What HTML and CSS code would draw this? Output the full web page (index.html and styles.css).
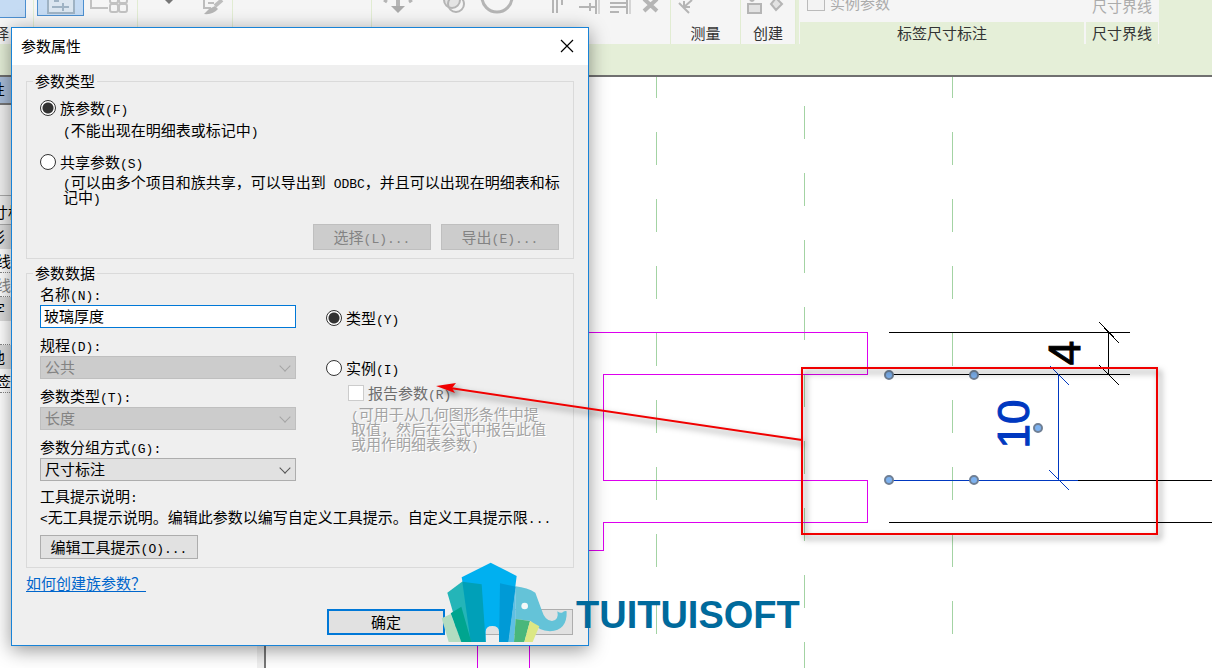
FILE: index.html
```html
<!DOCTYPE html>
<html lang="zh-CN">
<head>
<meta charset="utf-8">
<title>参数属性</title>
<link rel="stylesheet" href="styles.css">
</head>
<body>
<div class="app">
  <header class="ribbon">
    <section class="group group-select">
      <div class="tools"><span class="tool-active tool-cursor"></span></div>
      <h2 class="group-label">选择</h2>
    </section>
    <section class="group group-props">
      <div class="tools">
        <span class="tool-active tool-type">
          <svg width="28" height="15" viewBox="0 0 28 15" fill="none" stroke="#9fb3c4" stroke-width="2"><path d="M1 0V13H27V0" fill="#dbe6f0"/><path d="M5 7H22M16 3V11M7 1H12"/></svg>
        </span>
        <svg width="42" height="16" viewBox="0 0 42 16" fill="none" stroke="#c2c2c2" stroke-width="2"><path d="M3 0V8H20"/><rect x="22" y="-5" width="8" height="8" rx="2"/><rect x="31" y="-5" width="8" height="8" rx="2"/><rect x="22" y="4" width="8" height="8" rx="2"/><rect x="31" y="4" width="8" height="8" rx="2"/></svg>
      </div>
    </section>
    <section class="group group-clip">
      <div class="tools">
        <svg width="90" height="18" viewBox="0 0 90 18" fill="none" stroke="#bdbdbd" stroke-width="2"><path d="M27 0H35L31 4Z" fill="#777" stroke="none"/><path d="M66 0V8H73M70 3H76"/><path d="M84 0L77 6" stroke-width="4"/><path d="M77 6L71 9L66 14Q75 15 80 9Z" fill="#b5b5b5" stroke="none"/></svg>
      </div>
    </section>
    <section class="group group-geometry"></section>
    <section class="group group-modify">
      <div class="tools">
        <svg width="296" height="18" viewBox="0 0 296 18" fill="none" stroke="#b5b5b5" stroke-width="2">
          <path d="M26 0V7" stroke-width="4"/><path d="M19 6H33L26 13Z" fill="#aaa" stroke="none"/><path d="M12 0L15 2M40 0L37 2" stroke-width="3"/>
          <circle cx="80" cy="0" r="8" fill="#e4e4e4"/><circle cx="84" cy="4" r="8"/>
          <circle cx="125" cy="-3" r="15" stroke-width="3"/>
          <path d="M181 0V13M185 0V13M190 0V5"/>
          <path d="M207 7H223M224 0V14M218 3V11"/><path d="M227 0V14" stroke-width="1"/>
          <path d="M238 3H256M238 7H256M238 12H247M255 0V14"/><path d="M258 0V14" stroke-width="1"/>
          <path d="M272 -1L285 11M285 -1L272 11" stroke-width="4"/>
        </svg>
      </div>
    </section>
    <section class="group group-measure">
      <div class="tools"><svg width="30" height="16" viewBox="0 0 30 16" fill="none" stroke="#b5b5b5" stroke-width="2"><path d="M8 3L18 13M21 0L13 7M13 1V7H19"/></svg></div>
      <h2 class="group-label">测量</h2>
    </section>
    <section class="group group-create">
      <div class="tools"><svg width="48" height="16" viewBox="0 0 48 16" fill="#e2e2e2" stroke="#b5b5b5" stroke-width="2"><rect x="7" y="4" width="13" height="9"/><path d="M9 0H13L11 1ZM35 -2L41 4L35 10L30 4Z"/></svg></div>
      <h2 class="group-label">创建</h2>
    </section>
    <section class="group group-label-dim">
      <div class="tools"><label class="ribbon-check"><input type="checkbox" disabled>实例参数</label></div>
      <h2 class="group-label">标签尺寸标注</h2>
    </section>
    <section class="group group-witness">
      <div class="tools"><span class="tool-text">尺寸界线</span></div>
      <h2 class="group-label">尺寸界线</h2>
    </section>
  </header>

  <main class="workspace">
    <aside class="properties">
      <div class="prop prop-title">性</div>
      <div class="prop prop-preview"></div>
      <div class="prop prop-family">寸标</div>
      <div class="prop prop-head">形</div>
      <div class="prop">线</div>
      <div class="prop prop-muted">线</div>
      <div class="prop prop-head">字</div>
      <div class="prop"></div>
      <div class="prop prop-head">他</div>
      <div class="prop">签</div>
    </aside>
    <svg class="drawing" role="img" aria-label="族视图">
      <g transform="translate(-266 -77)" fill="none" shape-rendering="crispEdges">
        <g stroke="#a3d3a3" stroke-dasharray="33 34">
          <path d="M656.5 65V668"/><path d="M804.5 106V668"/><path d="M952.5 65V668"/>
        </g>
        <path stroke="#dd00ee" d="M560 332.500H867.500V374.500H603.500V480.500H867.500V522.500H603.500V550.500H560M477.500 600V668M529.500 600V668"/>
        <path stroke="#000" d="M889 332.500H1130M889 374.500H1130M1108.500 332V374M1099 322L1119 343M1099 365L1119 385M1078 480.500H2400M889 522.500H2400"/>
        <path stroke="#0038c0" d="M1058.500 375V480M889 480.500H1078M1050 366L1069 385M1049 470L1069 490"/>
      </g>
      <g transform="translate(-266 -77)">
        <g class="grips"><circle cx="889" cy="375" r="4"/><circle cx="974" cy="375" r="4"/><circle cx="889" cy="480" r="4"/><circle cx="974" cy="480" r="4"/><circle cx="1038" cy="428" r="4"/></g>
        <text class="dim" transform="translate(1080 353) rotate(-90)">4</text>
        <text class="dim dim-active" transform="translate(1029 424) rotate(-90)">10</text>
      </g>
    </svg>
  </main>
</div>

<form class="dialog" role="dialog" aria-labelledby="dialog-title">
  <div class="titlebar">
    <h1 id="dialog-title" class="title">参数属性</h1>
    <button type="button" class="close" aria-label="关闭"><svg width="14" height="14" viewBox="0 0 14 14" stroke="#000" stroke-width="1.200"><path d="M1 1L13 13M13 1L1 13"/></svg></button>
  </div>
  <div class="content">
    <fieldset class="box">
      <legend>参数类型</legend>
      <label class="option"><input type="radio" name="kind" checked><span>族参数<span class="lat">(F)</span></span></label>
      <p class="note"><span class="lat">(</span>不能出现在明细表或标记中<span class="lat">)</span></p>
      <label class="option"><input type="radio" name="kind"><span>共享参数<span class="lat">(S)</span></span></label>
      <p class="note note-tight"><span class="lat">(</span>可以由多个项目和族共享，可以导出到<span class="lat"> ODBC</span>，并且可以出现在明细表和标<br>记中<span class="lat">)</span></p>
      <div class="actions">
        <button type="button" class="btn" disabled>选择<span class="lat">(L)...</span></button>
        <button type="button" class="btn" disabled>导出<span class="lat">(E)...</span></button>
      </div>
    </fieldset>

    <fieldset class="box box-data">
      <legend>参数数据</legend>
      <div class="columns">
        <div class="fields">
          <div class="field">
            <label for="name">名称<span class="lat">(N):</span></label>
            <input id="name" class="text" type="text" value="玻璃厚度">
          </div>
          <div class="field">
            <label for="discipline">规程<span class="lat">(D):</span></label>
            <div class="combo combo-off"><select id="discipline" disabled><option>公共</option></select></div>
          </div>
          <div class="field">
            <label for="type">参数类型<span class="lat">(T):</span></label>
            <div class="combo combo-off"><select id="type" disabled><option>长度</option></select></div>
          </div>
          <div class="field">
            <label for="grouping">参数分组方式<span class="lat">(G):</span></label>
            <div class="combo"><select id="grouping"><option>尺寸标注</option></select></div>
          </div>
        </div>
        <div class="scope">
          <label class="option"><input type="radio" name="scope" checked><span>类型<span class="lat">(Y)</span></span></label>
          <label class="option option-instance"><input type="radio" name="scope"><span>实例<span class="lat">(I)</span></span></label>
          <label class="option option-report"><input type="checkbox" disabled><span>报告参数<span class="lat">(R)</span></span></label>
          <p class="note-off"><span class="lat">(</span>可用于从几何图形条件中提<br>取值，然后在公式中报告此值<br>或用作明细表参数<span class="lat">)</span></p>
        </div>
      </div>
      <div class="tooltip-block">
        <p>工具提示说明<span class="lat">:</span></p>
        <p class="tooltip-text"><span class="lat">&lt;</span>无工具提示说明。编辑此参数以编写自定义工具提示。自定义工具提示限<span class="lat">...</span></p>
        <button type="button" class="btn btn-edit">编辑工具提示<span class="lat">(O)...</span></button>
      </div>
    </fieldset>

    <a class="help" href="#">如何创建族参数？</a>
    <div class="footer">
      <button type="submit" class="btn btn-ok">确定</button>
      <button type="button" class="btn" aria-label="取消"></button>
    </div>
  </div>
</form>

<svg class="callout" aria-hidden="true">
  <g class="callout-ink">
    <rect x="802" y="368" width="355" height="166" fill="none" stroke="#f00000" stroke-width="2"/>
    <path d="M802 440L450 388" stroke="#f00000" stroke-width="2"/>
    <path d="M436 386L456 383L452 388L455 393Z" fill="#f00000"/>
  </g>
</svg>

<div class="brand">
  <svg width="130" height="82" viewBox="30 36 390 246" aria-hidden="true">
    <path d="M182 38L260 78L235 276H207V245Q207 228 187 228T167 245V276H130L95 82Z" fill="#00b0f0"/>
    <path d="M210 100L258 110L236 276H207Z" fill="#009ad6"/>
    <path d="M52 128L98 94L140 276H95Z" fill="#24b5b8"/>
    <path d="M97 95L155 103L167 276H122Z" fill="#00a0b8"/>
    <path d="M35 205L62 192L95 276H56Z" fill="#b2dcc0"/>
    <path d="M62 190L94 170L124 276H94Z" fill="#00a58f"/>
    <path d="M257 109Q292 113 316 128L335 180Q345 213 366 213Q388 210 382 184Q390 190 396 188Q404 180 410 184Q412 242 360 244Q326 243 302 213L257 207Z" fill="#64c3d8"/>
    <path d="M257 109V207L252 276H235Z" fill="#5fbfe3"/>
    <path d="M257 207L300 213L283 276H252Z" fill="#49b77b"/>
    <path d="M300 213L328 229L308 276H283Z" fill="#dce884"/>
    <circle cx="284" cy="168" r="10" fill="#f5f8f8"/>
  </svg>
  <span class="brand-name">TUITUISOFT</span>
</div>
</body>
</html>
```

FILE: styles.css
```css
* { box-sizing: border-box; }

body {
  margin: 0;
  overflow: hidden;
  font: 15px/16px "Noto Sans CJK SC", sans-serif;
  color: #000;
  background: #fff;
}

h1, h2, p { margin: 0; font-size: 15px; font-weight: 400; }
button, input, select { margin: 0; font: inherit; color: inherit; }

.app { display: flex; flex-direction: column; height: 100vh; }

/* Ribbon */
.ribbon {
  display: flex;
  align-items: flex-start;
  flex: none;
  height: 77px;
  background: #e5efd8;
  border-bottom: 2px solid #707070;
}
.group {
  flex: none;
  height: 44px;
  background: #f5f5f5;
  border-right: 1px solid #e1ecd2;
  overflow: hidden;
}
.tools { display: flex; align-items: flex-start; height: 22px; overflow: hidden; }
.group-label { padding-top: 3px; text-align: center; color: #333; white-space: nowrap; }
.group-select { width: 34px; }
.group-select .group-label { width: 9px; direction: rtl; }
.group-props { width: 104px; }
.group-props .tools { gap: 4px; padding-left: 3px; }
.group-clip { width: 95px; }
.group-geometry { width: 139px; }
.group-modify { width: 299px; }
.group-measure { width: 70px; }
.group-create { width: 55px; }
.group-label-dim { width: 286px; margin-left: 3px; }
.group-witness { width: 74px; }
.group-label-dim, .group-witness {
  background: #e5efd8;
  border-left: 1px solid #f5f5f5;
  border-right: 1px solid #f5f5f5;
}
.group-label-dim .tools, .group-witness .tools {
  align-items: flex-end;
  background: #f5f5f5;
  color: #ababab;
}
.tool-active { background: #c5dbf3; border: 1px solid #4c8fd0; border-top: 0; }
.tool-cursor { width: 26px; height: 18px; border-left: 0; }
.tool-type { display: flex; justify-content: center; width: 47px; height: 16px; }
.ribbon-check { display: flex; align-items: flex-end; gap: 5px; padding: 0 0 11px 7px; }
.ribbon-check input {
  appearance: none;
  width: 18px;
  height: 18px;
  border: 1px solid #bbb;
  background: #f3f3f3;
}
.tool-text { margin: 0 auto; padding-bottom: 8px; }

/* Workspace */
.workspace { display: flex; flex: 1; min-height: 0; }
.properties {
  flex: none;
  width: 266px;
  border-right: 2px solid #777;
  box-shadow: inset -7px 0 #f0f0f0;
}
.prop {
  height: 24px;
  padding: 4px 0;
  overflow: hidden;
  text-indent: -4px;
  border-bottom: 1px dotted #888;
}
.prop-title { height: 28px; background: #a9bdd8; border-bottom: 2px solid #777; text-indent: -10px; }
.prop-preview { height: 91px; background: #f0f0f0; border-bottom: 1px solid #aaa; }
.prop-family { height: 29px; padding: 8px 0; background: #ececec; border-bottom: 1px solid #aaa; text-indent: -7px; }
.prop-head { background: #dcdcdc; border-bottom: 0; text-indent: -10px; }
.prop-muted { color: #888; }

.drawing { flex: 1; min-width: 0; height: 100%; overflow: hidden; }
.grips { fill: #7db2f0; stroke: #6f7f94; stroke-width: 2px; }
.dim { font: 44px "Liberation Sans", sans-serif; text-anchor: middle; stroke: #000; stroke-width: 1px; }
.dim-active { fill: #0038c0; stroke: #0038c0; }

/* Dialog */
.dialog {
  position: absolute;
  left: 11px;
  top: 27px;
  width: 578px;
  background: #efefef;
  border: 1px solid #1883d7;
  box-shadow: 0 4px 18px rgba(0, 0, 0, .42);
}
.titlebar {
  display: flex;
  align-items: center;
  justify-content: space-between;
  height: 37px;
  padding: 0 14px 2px 9px;
  background: #fff;
}
.close { display: flex; padding: 0; border: 0; background: none; }
.content { padding: 8px 14px 10px; }
.lat { font-family: "Liberation Mono", monospace; font-size: 13px; line-height: 0; white-space: pre; }

.box { min-width: 0; margin: 0; padding: 11px 14px 8px 13px; border: 1px solid #dadada; }
.box legend { margin-left: -7px; padding: 0 2px; }
.box-data { margin-top: 6px; padding-top: 5px; }

.option { display: flex; align-items: center; gap: 4px; height: 16px; white-space: nowrap; }
.option input {
  appearance: none;
  flex: none;
  width: 16px;
  height: 16px;
  background: #fff;
  border: 1px solid #333;
}
.option input[type="radio"] { border-radius: 50%; }
.option input[type="radio"]:checked { background: radial-gradient(circle, #333 5px, #fff 6px); }
.note { margin: 6px 0 16px 23px; white-space: nowrap; }
.note-tight { margin: 4px 0 20px 23px; line-height: 15px; }
.actions { display: flex; justify-content: flex-end; gap: 10px; }

.btn {
  width: 118px;
  height: 26px;
  padding: 0;
  line-height: 16px;
  background: #e1e1e1;
  border: 1px solid #adadad;
}
.btn:disabled { background: #ccc; border-color: #bfbfbf; color: #838383; }

.columns { display: flex; gap: 30px; }
.fields { display: flex; flex: none; flex-direction: column; gap: 9px; width: 256px; }
.field { display: flex; flex-direction: column; gap: 3px; }
.text {
  width: 100%;
  height: 23px;
  padding: 0 3px 3px;
  background: #fff;
  border: 1px solid #0078d7;
  outline: 0;
}
.combo { position: relative; height: 23px; }
.combo select {
  appearance: none;
  width: 100%;
  height: 23px;
  padding: 0 4px 1px;
  background: #e1e1e1;
  border: 1px solid #adadad;
  border-radius: 0;
}
.combo::after {
  content: "";
  position: absolute;
  right: 7px;
  top: 6px;
  width: 7px;
  height: 7px;
  border: solid #555;
  border-width: 0 1px 1px 0;
  transform: rotate(45deg);
  pointer-events: none;
}
.combo-off select { background: #ccc; border-color: #bfbfbf; color: #838383; opacity: 1; }
.combo-off::after { border-color: #a5a5a5; }

.scope { padding-top: 24px; }
.option-instance { margin-top: 34px; }
.option-report { margin: 9px 0 0 22px; color: #6d6d6d; }
.option-report input { border-color: #ccc; }
.note-off { margin: 5px 0 0 25px; line-height: 15px; color: #a3a3a3; text-shadow: 1px 1px #fff; white-space: nowrap; }

.tooltip-block { margin-top: 7px; white-space: nowrap; }
.tooltip-text { margin: 5px 0 10px; }
.btn-edit { display: block; width: 158px; height: 24px; }

.help { display: table; margin-top: 7px; color: #0066cc; text-underline-offset: 2px; }
.footer { display: flex; justify-content: flex-end; gap: 10px; margin-top: 18px; padding-right: 1px; }
.btn-ok { border: 2px solid #0078d7; }

/* Markup drawn over the windows */
.callout { position: absolute; inset: 0; width: 100%; height: 100%; pointer-events: none; }
.callout-ink { filter: drop-shadow(3px 4px 3px rgba(0, 0, 0, .5)); }

.brand {
  position: absolute;
  left: 440px;
  top: 562px;
  display: flex;
  align-items: center;
  gap: 6px;
  pointer-events: none;
}
.brand-name {
  padding-top: 24px;
  font: 700 38px/44px "Liberation Sans", sans-serif;
  color: #006a9c;
}
```
